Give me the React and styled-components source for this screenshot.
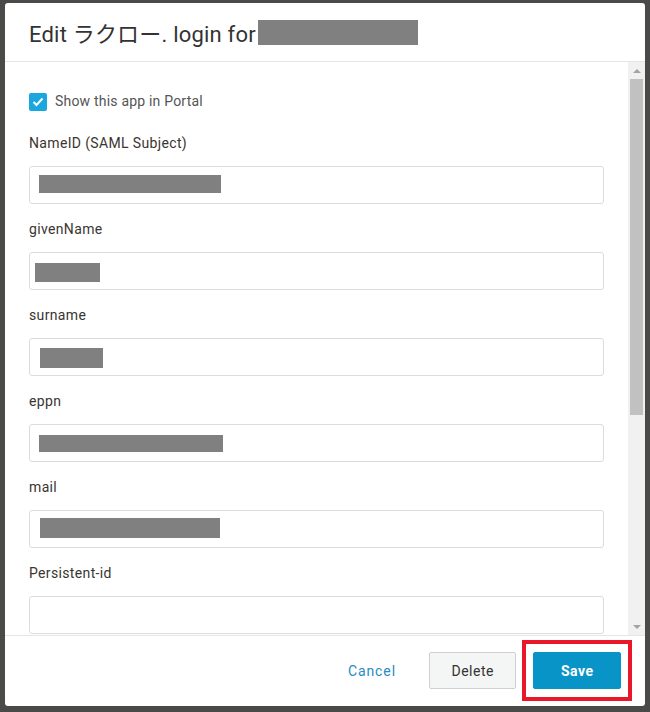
import React from "react";
import styled, { createGlobalStyle } from "styled-components";

const GlobalStyle = createGlobalStyle`
  html, body {
    margin: 0;
    padding: 0;
    background: #4a4b49;
  }
  body {
    font-family: Roboto, "Noto Sans", "Liberation Sans", sans-serif;
    color: #333;
  }
`;

const Backdrop = styled.div`
  width: 650px;
  height: 712px;
  padding: 3px 0 0 5px;
  box-sizing: border-box;
  background: #4a4b49;
`;

const Modal = styled.div`
  width: 640px;
  height: 703px;
  background: #fff;
  border-radius: 3px;
  display: flex;
  flex-direction: column;
  overflow: hidden;
`;

const Header = styled.div`
  height: 58px;
  flex: none;
  display: flex;
  align-items: center;
  padding: 0 24px;
  border-bottom: 1px solid #e5e5e5;
`;

const Title = styled.h2`
  margin: 0;
  font-family: Roboto, "Noto Sans CJK JP", sans-serif;
  font-size: 22px;
  font-weight: 400;
  letter-spacing: 0.2px;
  color: #333;
  display: flex;
  align-items: center;
  white-space: nowrap;
`;

const Masked = styled.span`
  display: inline-block;
  flex: none;
  width: ${(p) => p.$width}px;
  height: ${(p) => p.$height}px;
  margin-left: ${(p) => p.$left || 0}px;
  margin-top: ${(p) => p.$top || 0}px;
  background: #808080;
`;

const Body = styled.div`
  flex: 1;
  display: flex;
  min-height: 0;
`;

const Content = styled.div`
  flex: 1;
  overflow: hidden;
  padding: 30px 24px 0;
`;

const CheckRow = styled.label`
  display: flex;
  align-items: center;
  gap: 8px;
  height: 20px;
  margin-bottom: 20px;
  font-size: 14px;
  letter-spacing: 0.2px;
  color: #555;
  transform: translateY(-1px);
`;

const CheckBox = styled.span`
  width: 18px;
  height: 18px;
  border-radius: 2px;
  background: #1aa6df;
  display: flex;
  align-items: center;
  justify-content: center;
  transform: translateY(1px);
`;

const Field = styled.div`
  margin-bottom: 14px;
`;

const Label = styled.div`
  height: 20px;
  line-height: 23px;
  margin-bottom: 14px;
  font-size: 14px;
  letter-spacing: 0.35px;
  color: #3a3530;
`;

const TextBox = styled.div`
  height: 38px;
  box-sizing: border-box;
  border: 1px solid #dcdcdc;
  border-radius: 3px;
  background: #fff;
  display: flex;
  align-items: flex-start;
`;

const Scrollbar = styled.div`
  width: 17px;
  flex: none;
  background: #f1f1f1;
  display: flex;
  flex-direction: column;
`;

const ScrollArrow = styled.div`
  height: 17px;
  display: flex;
  align-items: center;
  justify-content: center;
  &::before {
    content: "";
    border-left: 4px solid transparent;
    border-right: 4px solid transparent;
    ${(p) =>
      p.$down
        ? "border-top: 4px solid #a3a3a3;"
        : "border-bottom: 4px solid #a3a3a3;"}
  }
`;

const Thumb = styled.div`
  height: 336px;
  margin: 0 2px;
  background: #c1c1c1;
`;

const Spacer = styled.div`
  flex: 1;
`;

const Footer = styled.div`
  flex: none;
  border-top: 1px solid #e5e5e5;
  display: flex;
  justify-content: flex-end;
  align-items: center;
  gap: 17px;
  padding: 16px 24px 17px;
`;

const Button = styled.button`
  height: 37px;
  box-sizing: border-box;
  font-family: Roboto, "Liberation Sans", sans-serif;
  font-size: 14px;
  letter-spacing: 0.5px;
  border-radius: 2px;
  cursor: pointer;
  padding: 0 ${(p) => p.$pad}px;
  ${(p) =>
    p.$variant === "link" &&
    `
    background: transparent;
    border: none;
    color: #2a8bbd;
    letter-spacing: 0.9px;
  `}
  ${(p) =>
    p.$variant === "default" &&
    `
    background: #f4f5f5;
    border: 1px solid #cfd0d0;
    color: #333;
  `}
  ${(p) =>
    p.$variant === "primary" &&
    `
    background: #0894c7;
    border: 1px solid #0894c7;
    color: #fff;
    font-weight: 700;
  `}
`;

const Highlight = styled.span`
  position: relative;
  display: flex;
`;

const HighlightFrame = styled.span`
  position: absolute;
  top: -12px;
  bottom: -12px;
  left: -11px;
  right: -11px;
  border: 4px solid #e8182a;
  pointer-events: none;
`;

const fields = [
  { label: "NameID (SAML Subject)", mask: { left: 9, top: 8, width: 182, height: 18 } },
  { label: "givenName", mask: { left: 5, top: 10, width: 65, height: 19 } },
  { label: "surname", mask: { left: 10, top: 9, width: 63, height: 20 } },
  { label: "eppn", mask: { left: 9, top: 10, width: 184, height: 17 } },
  { label: "mail", mask: { left: 10, top: 7, width: 180, height: 20 } },
  { label: "Persistent-id" },
];

export default function App() {
  return (
    <>
      <GlobalStyle />
      <Backdrop>
        <Modal>
          <Header>
            <Title>
              Edit ラクロー. login for
              <Masked $width={160} $height={25} $left={2} />
            </Title>
          </Header>
          <Body>
            <Content>
              <CheckRow>
                <CheckBox>
                  <svg width="12" height="10" viewBox="0 0 12 10">
                    <polyline
                      points="1.5,5 4.5,8 10.5,1.5"
                      fill="none"
                      stroke="#fff"
                      strokeWidth="2"
                    />
                  </svg>
                </CheckBox>
                Show this app in Portal
              </CheckRow>
              {fields.map((f) => (
                <Field key={f.label}>
                  <Label>{f.label}</Label>
                  <TextBox>
                    {f.mask && (
                      <Masked
                        $left={f.mask.left}
                        $top={f.mask.top}
                        $width={f.mask.width}
                        $height={f.mask.height}
                      />
                    )}
                  </TextBox>
                </Field>
              ))}
            </Content>
            <Scrollbar>
              <ScrollArrow />
              <Thumb />
              <Spacer />
              <ScrollArrow $down />
            </Scrollbar>
          </Body>
          <Footer>
            <Button $variant="link" $pad={16}>Cancel</Button>
            <Button $variant="default" $pad={21.5}>Delete</Button>
            <Highlight>
              <Button $variant="primary" $pad={26.5}>Save</Button>
              <HighlightFrame />
            </Highlight>
          </Footer>
        </Modal>
      </Backdrop>
    </>
  );
}
